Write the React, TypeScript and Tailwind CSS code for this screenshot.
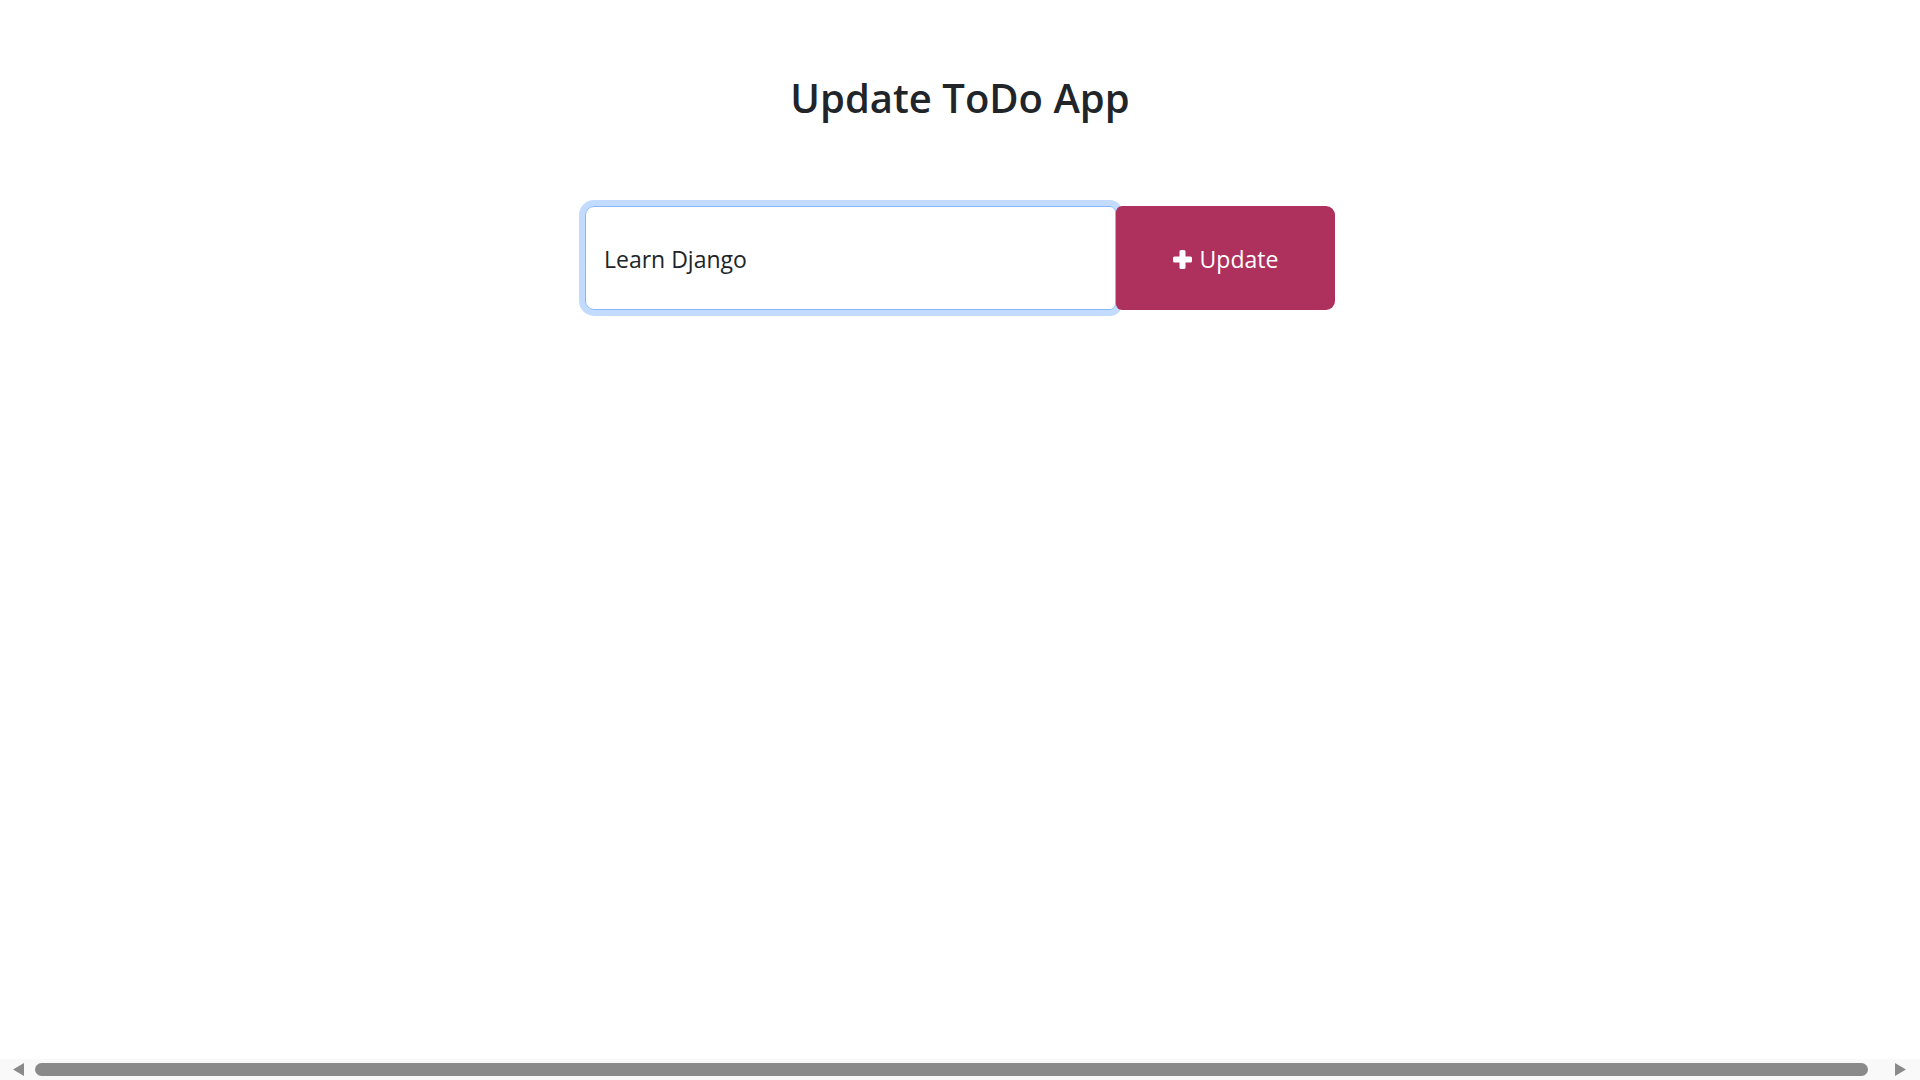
const Scrollbar = () => {
  return (
    <div className="h-[21px] bg-[#f9f9f9] flex items-center">
      <div className="w-[35px] flex items-center justify-center pl-[1px]">
        <svg width="11" height="13" viewBox="0 0 11 13">
          <path d="M11 0 L11 13 L0 6.5 Z" fill="#8a8a8a" />
        </svg>
      </div>
      <div className="flex-1 h-[13px] rounded-full bg-[#8a8a8a] mr-[17px]" />
      <div className="w-[35px] flex items-center justify-center pr-[5px]">
        <svg width="11" height="13" viewBox="0 0 11 13">
          <path d="M0 0 L0 13 L11 6.5 Z" fill="#8a8a8a" />
        </svg>
      </div>
    </div>
  );
};

const PlusIcon = () => (
  <svg width="19" height="19" viewBox="0 0 19 19" fill="currentColor">
    <rect x="6.5" y="0" width="6" height="19" rx="1.5" />
    <rect x="0" y="6.5" width="19" height="6" rx="1.5" />
  </svg>
);

export default function App() {
  return (
    <div className="h-screen flex flex-col bg-white text-[#212529] font-['Open_Sans','Noto_Sans',sans-serif]">
      <main className="flex-1 flex flex-col items-center">
        <h1 className="mt-[74px] text-[40px] leading-[1.2] font-semibold">Update ToDo App</h1>

        <form className="mt-[84px] flex w-[750px]" onSubmit={(e) => e.preventDefault()}>
          <input
            type="text"
            defaultValue="Learn Django"
            className="w-[531px] h-[104px] border border-[#86b7fe] rounded-l-[9px] rounded-r-[6px] pl-[18px] pt-[2px] text-[23px] text-[#212529] outline-none shadow-[0_0_0_6px_rgba(13,110,253,0.25)]"
          />
          <button
            type="submit"
            className="relative z-10 w-[219px] h-[104px] bg-[#ae305d] rounded-l-[6px] rounded-r-[9px] flex items-center justify-center gap-[8px] pt-[2px] text-white text-[23px]"
          >
            <PlusIcon />
            <span>Update</span>
          </button>
        </form>
      </main>

      <Scrollbar />
    </div>
  );
}
